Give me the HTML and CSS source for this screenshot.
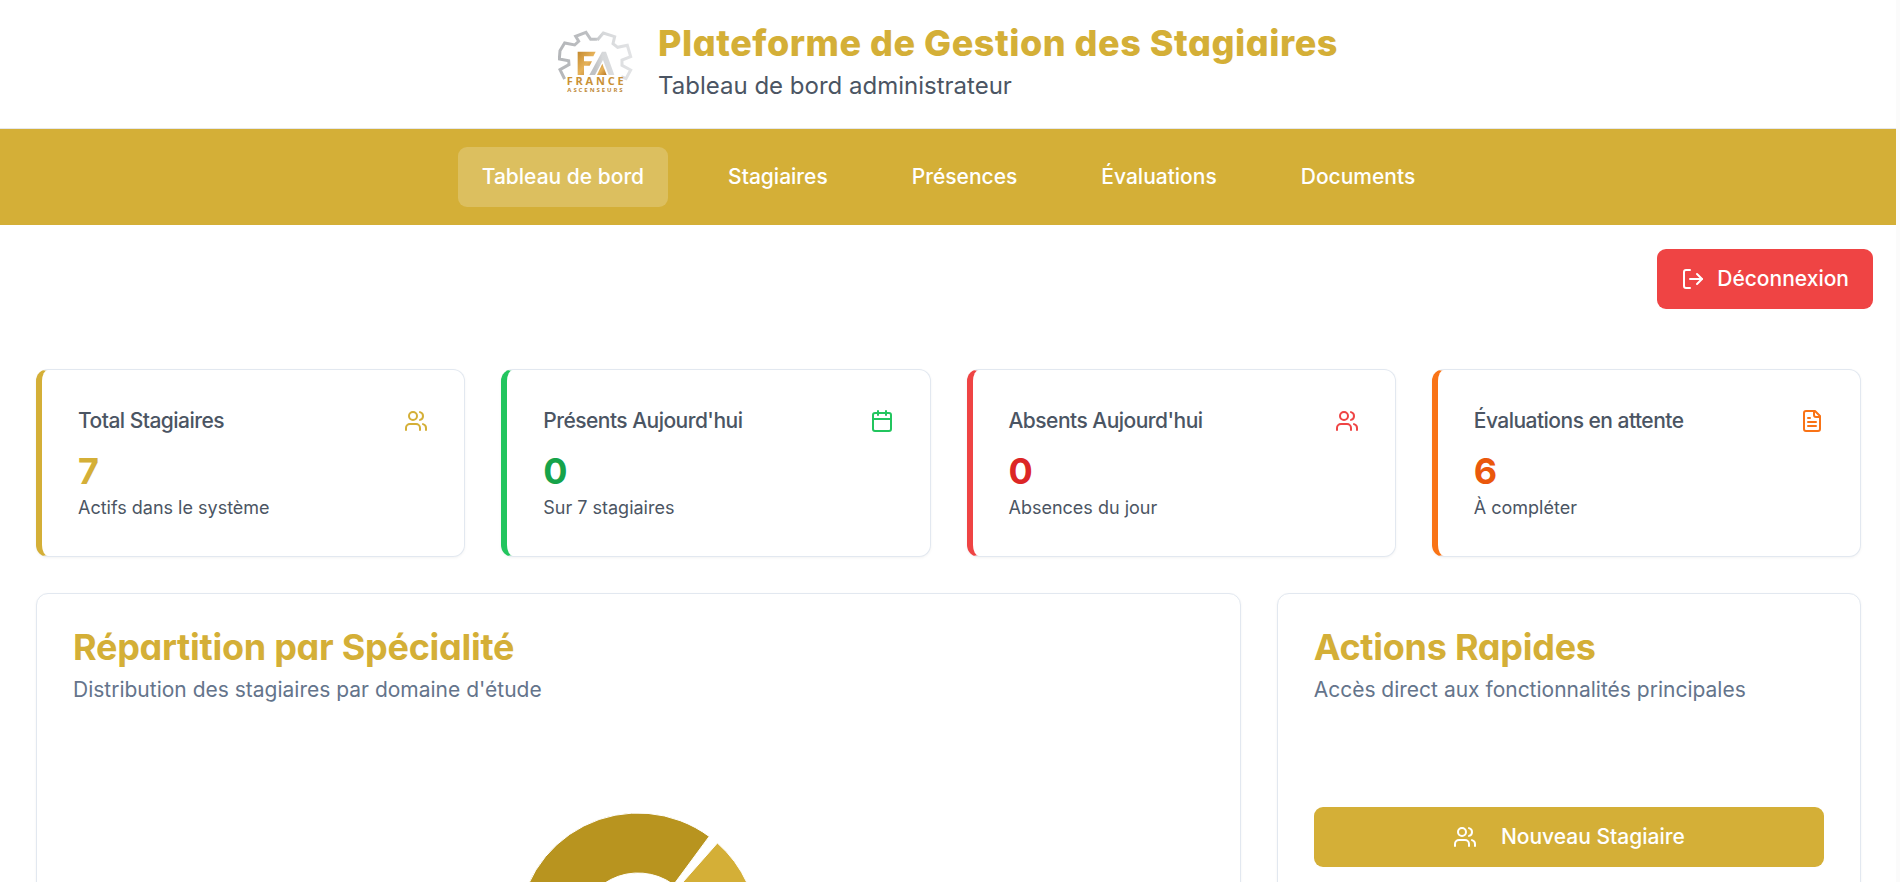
FILE: index.html
```html
<!DOCTYPE html>
<html lang="fr">
<head>
<meta charset="utf-8">
<title>Plateforme de Gestion des Stagiaires</title>
<link rel="stylesheet" href="styles.css">
</head>
<body>
<svg class="sprite" aria-hidden="true">
  <symbol id="users" viewBox="0 0 24 24"><path d="M16 21v-2a4 4 0 0 0-4-4H6a4 4 0 0 0-4 4v2"/><circle cx="9" cy="7" r="4"/><path d="M22 21v-2a4 4 0 0 0-3-3.87"/><path d="M16 3.13a4 4 0 0 1 0 7.75"/></symbol>
  <symbol id="calendar" viewBox="0 0 24 24"><path d="M8 2v4"/><path d="M16 2v4"/><rect width="18" height="18" x="3" y="4" rx="2"/><path d="M3 10h18"/></symbol>
  <symbol id="file" viewBox="0 0 24 24"><path d="M15 2H6a2 2 0 0 0-2 2v16a2 2 0 0 0 2 2h12a2 2 0 0 0 2-2V7Z"/><path d="M14 2v4a2 2 0 0 0 2 2h4"/><path d="M10 9H8"/><path d="M16 13H8"/><path d="M16 17H8"/></symbol>
  <symbol id="logout" viewBox="0 0 24 24"><path d="M9 21H5a2 2 0 0 1-2-2V5a2 2 0 0 1 2-2h4"/><path d="m16 17 5-5-5-5"/><path d="M21 12H9"/></symbol>
</svg>
<div class="page">
  <header class="header">
    <svg class="logo" viewBox="54 33 228 216">
      <defs>
        <linearGradient id="silver" gradientUnits="userSpaceOnUse" x1="54" y1="0" x2="276" y2="0"><stop offset="0" stop-color="#b4b6b9"/><stop offset=".5" stop-color="#c0c2c5"/><stop offset=".6" stop-color="#d6d8da"/><stop offset="1" stop-color="#e2e3e5"/></linearGradient>
        <linearGradient id="gold" x1="0" y1="0" x2="1" y2="1"><stop offset="0" stop-color="#c48a2e"/><stop offset=".5" stop-color="#e6b25a"/><stop offset="1" stop-color="#b97722"/></linearGradient>
      </defs>
      <path class="gear" d="M74 207 60 179 87 164 86 152 58 147 60 122 74 99 104 105 116 94 107 79 138 67 152 88 172 88"/>
      <path class="gear" d="M172 90 190 69 224 80 219 101 233 112 262 106 272 140 246 150 246 166 272 180 258 206 244 200"/>
      <path class="logo-gold" d="M113 125h54l-7 14h-28v15h24l-7 13h-17v28h-19z"/>
      <path class="logo-silver" d="M148 195 186 125h12l25 70h-17l-17-45-24 45z"/>
      <path class="logo-gold" d="m171 195 16-34 13 34z"/>
      <text class="logo-name" x="80" y="224" textLength="171">FRANCE</text>
      <text class="logo-sub" x="82" y="245" textLength="166">ASCENSEURS</text>
    </svg>
    <div>
      <h1 class="title">Plateforme de Gestion des Stagiaires</h1>
      <p class="tagline">Tableau de bord administrateur</p>
    </div>
  </header>
  <nav class="nav">
    <a class="nav-item active">Tableau de bord</a>
    <a class="nav-item">Stagiaires</a>
    <a class="nav-item">Présences</a>
    <a class="nav-item">Évaluations</a>
    <a class="nav-item">Documents</a>
  </nav>
  <div class="toolbar">
    <button class="btn logout"><svg class="icon"><use href="#logout"/></svg>Déconnexion</button>
  </div>
  <main class="main">
    <section class="stats">
      <article class="card stat gold">
        <div class="stat-head"><h3>Total Stagiaires</h3><svg class="icon"><use href="#users"/></svg></div>
        <div class="value">7</div><p>Actifs dans le système</p>
      </article>
      <article class="card stat green">
        <div class="stat-head"><h3>Présents Aujourd'hui</h3><svg class="icon"><use href="#calendar"/></svg></div>
        <div class="value">0</div><p>Sur 7 stagiaires</p>
      </article>
      <article class="card stat red">
        <div class="stat-head"><h3>Absents Aujourd'hui</h3><svg class="icon"><use href="#users"/></svg></div>
        <div class="value">0</div><p>Absences du jour</p>
      </article>
      <article class="card stat orange">
        <div class="stat-head"><h3>Évaluations en attente</h3><svg class="icon"><use href="#file"/></svg></div>
        <div class="value">6</div><p>À compléter</p>
      </article>
    </section>
    <section class="panels">
      <article class="card panel">
        <h2>Répartition par Spécialité</h2>
        <p class="desc">Distribution des stagiaires par domaine d'étude</p>
        <svg class="chart" viewBox="-120 -120 240 240">
          <path class="slice-dark" d="M71.210 -96.590A120 120 0 0 0 -120 0L-60 0A60 60 0 0 1 35.600 -48.290Z"/>
          <path class="slice-light" d="M120 0A120 120 0 0 0 79.400 -89.980L39.700 -44.990A60 60 0 0 1 60 0Z"/>
        </svg>
      </article>
      <article class="card panel">
        <h2>Actions Rapides</h2>
        <p class="desc">Accès direct aux fonctionnalités principales</p>
        <button class="btn primary"><svg class="icon"><use href="#users"/></svg>Nouveau Stagiaire</button>
      </article>
    </section>
  </main>
</div>
</body>
</html>
```
FILE: styles.css
```css
* { box-sizing: border-box; margin: 0; padding: 0; }
html, body { height: 882px; overflow: hidden; }
body { background: #fbfbfb; font-family: Inter, sans-serif; color: #4b5563; }
.sprite { display: none; }
.page { width: 1896px; height: 100%; overflow: hidden; background: #fff; }
.icon { width: 24px; height: 24px; flex: none; fill: none; stroke: currentColor; stroke-width: 2; stroke-linecap: round; stroke-linejoin: round; }

.header { height: 129px; display: flex; justify-content: center; align-items: flex-start; gap: 24px; padding: 21px 0 0; border-bottom: 1px solid #e5e7eb; }
.logo { width: 76px; height: 72px; }
.gear { fill: none; stroke: url(#silver); stroke-width: 9; }
.logo-gold { fill: url(#gold); }
.logo-silver { fill: url(#silver); }
.logo-name { font: 700 33px "Open Sans", sans-serif; fill: #c99136; }
.logo-sub { font: 700 18px "Open Sans", sans-serif; fill: #c08a3a; }
.title { font-size: 36px; line-height: 36px; margin-top: 4px; font-weight: 800; letter-spacing: .53px; color: #d4af37; font-feature-settings: "cv11"; }
.tagline { font-size: 24px; line-height: 36px; margin-top: 7px; }

.nav { height: 96px; padding-left: 1px; background: #d4af37; display: flex; justify-content: center; align-items: center; gap: 36px; }
.nav-item { height: 60px; padding: 0 24px; border-radius: 9px; font-size: 21px; font-weight: 500; line-height: 60px; color: #fff; }
.nav-item.active { background: rgba(255, 255, 255, .2); }

.toolbar { display: flex; justify-content: flex-end; padding: 24px 23px 0 0; }
.btn { height: 60px; display: flex; align-items: center; justify-content: center; border: 0; border-radius: 9px; color: #fff; font: 500 21px/30px Inter, sans-serif; }
.logout { background: #ef4444; padding: 0 24px; gap: 12px; }

.main { padding: 60px 35px 0 36px; }
.card { border: 1px solid #e2e8f0; border-radius: 12px; background: #fff; box-shadow: 0 1px 3px rgba(0, 0, 0, .05); }
.stats { display: grid; grid-template-columns: repeat(4, 1fr); gap: 36px; }
.stat { height: 188px; padding: 36px; border-left: 6px solid var(--accent); }
.stat-head { display: flex; justify-content: space-between; align-items: center; height: 30px; }
.stat h3 { font-size: 21px; font-weight: 500; line-height: 30px; letter-spacing: -.525px; color: #4b5563; }
.value { font-size: 36px; font-weight: 700; line-height: 48px; margin-top: 11px; }
.stat p { font-size: 18px; line-height: 24px; margin-top: 1px; color: #4b5563; }
.stat .icon { color: var(--accent); }
.gold { --accent: #d4af37; }
.gold .value { color: #d4af37; }
.green { --accent: #22c55e; }
.green .value { color: #16a34a; }
.red { --accent: #ef4444; }
.red .value { color: #dc2626; }
.orange { --accent: #f97316; }
.orange .value { color: #ea580c; }

.panels { display: grid; grid-template-columns: repeat(3, 1fr); gap: 36px; margin-top: 36px; }
.panel { height: 640px; padding: 36px; }
.panel:first-child { grid-column: span 2; }
.panel h2 { font-size: 36px; line-height: 35px; font-weight: 700; letter-spacing: -.26px; color: #d4af37; font-feature-settings: "cv11"; }
.desc { font-size: 21px; line-height: 30px; margin-top: 10px; color: #64748b; }
.chart { display: block; width: 240px; height: 240px; margin: 108px auto 0; overflow: visible; }
.chart path { stroke: #fff; stroke-width: 1; }
.slice-dark { fill: #b8941f; }
.slice-light { fill: #d4af37; }
.primary { width: 100%; margin-top: 102px; gap: 24px; background: #d4af37; }
```
